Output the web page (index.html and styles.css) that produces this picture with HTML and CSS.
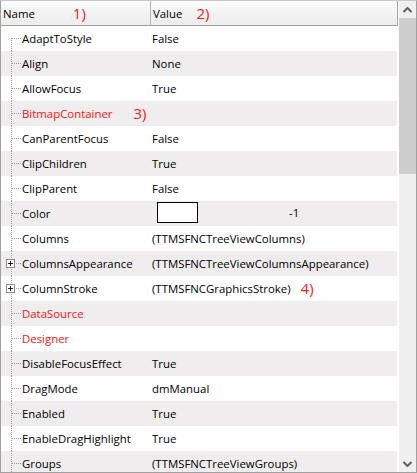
FILE: index.html
```
<!DOCTYPE html>
<html>
  <head>
    <meta charset="utf-8">
    <title>Object inspector</title>
    <link rel="stylesheet" href="styles.css">
  </head>
  <body>
    <div class="inspector">
      <div class="grid">
        <div class="header">
          <div class="hcell name-col">Name <span class="mark mark-1">1)</span></div>
          <div class="hcell value-col">Value <span class="mark mark-2">2)</span></div>
        </div>
        <div class="rows">
          <div class="row first"><div class="name"><span class="toggle"></span>AdaptToStyle</div><div class="value">False</div></div>
          <div class="row alt"><div class="name"><span class="toggle"></span>Align</div><div class="value">None</div></div>
          <div class="row"><div class="name"><span class="toggle"></span>AllowFocus</div><div class="value">True</div></div>
          <div class="row alt"><div class="name red"><span class="toggle"></span>BitmapContainer <span class="mark mark-3">3)</span></div><div class="value"></div></div>
          <div class="row"><div class="name"><span class="toggle"></span>CanParentFocus</div><div class="value">False</div></div>
          <div class="row alt"><div class="name"><span class="toggle"></span>ClipChildren</div><div class="value">True</div></div>
          <div class="row"><div class="name"><span class="toggle"></span>ClipParent</div><div class="value">False</div></div>
          <div class="row alt"><div class="name"><span class="toggle"></span>Color</div><div class="value color-value"><span class="swatch"></span><span class="color-num">-1</span></div></div>
          <div class="row"><div class="name"><span class="toggle"></span>Columns</div><div class="value">(TTMSFNCTreeViewColumns)</div></div>
          <div class="row alt"><div class="name"><span class="toggle plus"></span>ColumnsAppearance</div><div class="value">(TTMSFNCTreeViewColumnsAppearance)</div></div>
          <div class="row"><div class="name"><span class="toggle plus"></span>ColumnStroke</div><div class="value">(TTMSFNCGraphicsStroke) <span class="mark mark-4">4)</span></div></div>
          <div class="row alt"><div class="name red"><span class="toggle"></span>DataSource</div><div class="value"></div></div>
          <div class="row"><div class="name red"><span class="toggle"></span>Designer</div><div class="value"></div></div>
          <div class="row alt"><div class="name"><span class="toggle"></span>DisableFocusEffect</div><div class="value">True</div></div>
          <div class="row"><div class="name"><span class="toggle"></span>DragMode</div><div class="value">dmManual</div></div>
          <div class="row alt"><div class="name"><span class="toggle"></span>Enabled</div><div class="value">True</div></div>
          <div class="row"><div class="name"><span class="toggle"></span>EnableDragHighlight</div><div class="value">True</div></div>
          <div class="row alt"><div class="name"><span class="toggle"></span>Groups</div><div class="value">(TTMSFNCTreeViewGroups)</div></div>
        </div>
      </div>
      <div class="scrollbar">
        <div class="sb-btn">
          <svg width="9" height="6" viewBox="0 0 9 6"><path d="M0.5 5 L4.5 1 L8.5 5" fill="none" stroke="#606060" stroke-width="2"/></svg>
        </div>
        <div class="sb-thumb"></div>
        <div class="sb-track"></div>
        <div class="sb-btn">
          <svg width="9" height="6" viewBox="0 0 9 6"><path d="M0.5 1 L4.5 5 L8.5 1" fill="none" stroke="#606060" stroke-width="2"/></svg>
        </div>
      </div>
    </div>
  </body>
</html>
```
FILE: styles.css
```
body, html {
  margin: 0;
}

body {
  background: #fff;
  font-family: "Open Sans", sans-serif;
  font-size: 11.4px;
  color: #000;
}

.inspector {
  width: 417px;
  height: 473px;
  box-sizing: border-box;
  border: 1px solid #a0a0a0;
  border-top-color: #c8c8c8;
  display: flex;
  overflow: hidden;
}

.grid {
  flex-grow: 1;
  display: flex;
  flex-direction: column;
  overflow: hidden;
}

.header {
  height: 24px;
  flex-shrink: 0;
  display: flex;
  background: linear-gradient(to bottom, #fbfbfb, #ececec);
  border-bottom: 1px solid #a0a0a0;
  border-right: 1px solid #a0a0a0;
}

.hcell {
  display: flex;
  align-items: center;
  white-space: nowrap;
}

.name-col {
  width: 147px;
  padding-left: 2px;
  border-right: 1px solid #b4b4b4;
}

.value-col {
  padding-left: 2px;
}

.mark {
  color: #f02020;
  font-size: 15px;
}
.mark-1 { margin-left: 38px; }
.mark-2 { margin-left: 14px; }
.mark-3 { margin-left: 21px; }
.mark-4 { margin-left: 10px; }

.rows {
  display: flex;
  flex-direction: column;
}

.row {
  height: 25px;
  flex-shrink: 0;
  display: flex;
  margin-right: 1px;
}
.row.alt {
  background: #efedee;
}

.name {
  width: 143px;
  padding-left: 5px;
  padding-bottom: 1px;
  box-sizing: border-box;
  flex-basis: 148px;
  flex-shrink: 0;
  display: flex;
  align-items: center;
  white-space: nowrap;
  background-image:
    repeating-linear-gradient(to bottom, #a0a0a0 0 1px, transparent 1px 2px),
    repeating-linear-gradient(to right, #a0a0a0 0 1px, transparent 1px 2px);
  background-size: 1px 100%, 10px 1px;
  background-position: 10px 0, 11px 12px;
  background-repeat: no-repeat;
}
.row.first .name {
  background-size: 1px 13px, 10px 1px;
  background-position: 10px 12px, 11px 12px;
}
.name.red {
  color: #ff1010;
}

.toggle {
  width: 9px;
  height: 9px;
  margin-right: 7px;
  margin-top: 1px;
  box-sizing: border-box;
  flex-shrink: 0;
}
.toggle.plus {
  border: 1px solid #8c8c8c;
  background:
    linear-gradient(#202020, #202020) center / 5px 1px no-repeat,
    linear-gradient(#202020, #202020) center / 1px 5px no-repeat,
    #fff;
}

.value {
  flex-grow: 1;
  padding-left: 3px;
  padding-bottom: 1px;
  display: flex;
  align-items: center;
  white-space: nowrap;
}

.color-value {
  align-items: flex-start;
  padding-bottom: 0;
}
.swatch {
  width: 41px;
  height: 21px;
  box-sizing: border-box;
  border: 1px solid #000;
  background: #fff;
  margin-left: 5px;
  margin-top: 1px;
}
.color-num {
  margin-left: 91px;
  line-height: 23px;
}

.scrollbar {
  width: 17px;
  flex-shrink: 0;
  margin-left: 1px;
  background: #f0f0f0;
  display: flex;
  flex-direction: column;
}
.sb-btn {
  height: 17px;
  flex-shrink: 0;
  display: flex;
  align-items: center;
  justify-content: center;
}
.sb-thumb {
  height: 156px;
  flex-shrink: 0;
  background: #cdcdcd;
}
.sb-track {
  flex-grow: 1;
}
```
